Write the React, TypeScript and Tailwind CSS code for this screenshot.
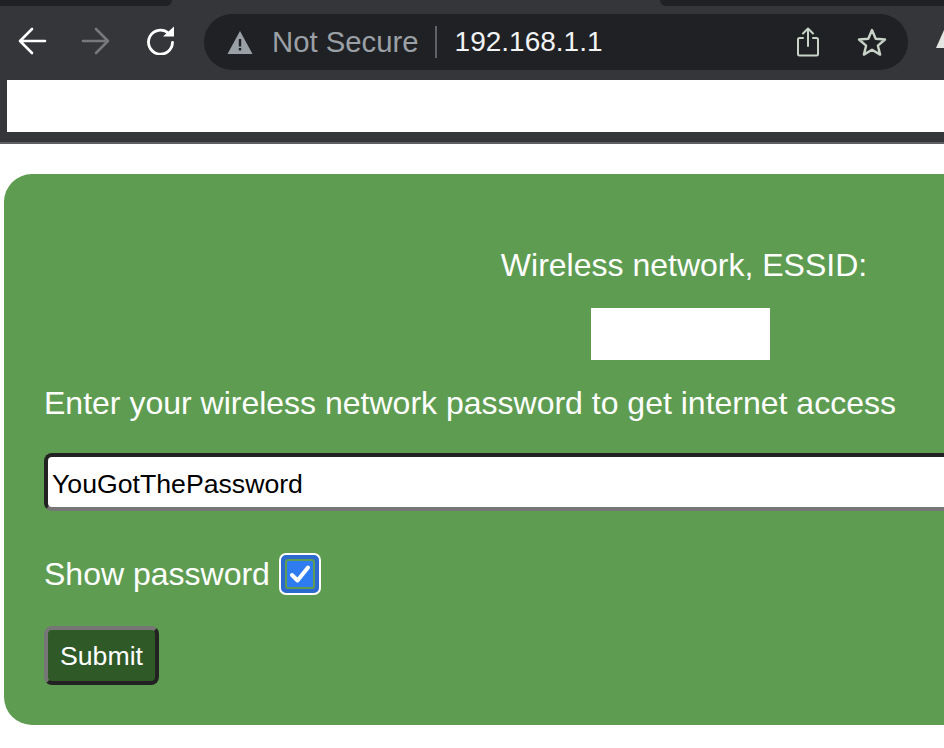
export default function App() {
  return (
    <div className="w-[944px] h-[748px] overflow-hidden bg-white font-['Liberation_Sans',Arial,sans-serif]">
      <header className="relative h-[144px] bg-[#35363a] border-b-2 border-[#5f6063]">
        <div className="absolute left-0 top-0 w-[172px] h-[6px] bg-[#202124] rounded-br-[8px]" />
        <div className="absolute left-[660px] top-0 w-[284px] h-[6px] bg-[#202124] rounded-bl-[8px]" />
        <div className="flex items-center h-[80px] pt-[4px] pl-[18px]">
          <svg width="30" height="28" viewBox="0 0 30 28" fill="none" stroke="#fff" strokeWidth="2.6" strokeLinecap="round" strokeLinejoin="round" className="w-[30px] h-[28px] mt-[-2px]">
            <path d="M2 14H27M14 2L2 14L14 26" />
          </svg>
          <svg width="30" height="28" viewBox="0 0 30 28" fill="none" stroke="#77787b" strokeWidth="2.6" strokeLinecap="round" strokeLinejoin="round" className="ml-[33px] w-[30px] h-[28px] mt-[-2px]">
            <path d="M2 14H27M15 2L27 14L15 26" />
          </svg>
          <svg width="30" height="30" viewBox="0 0 30 30" fill="none" className="ml-[35px] w-[30px] h-[30px] mt-[-4px]">
            <path d="M22.5 8.2A12 12 0 1 0 26.5 17.5" stroke="#fff" strokeWidth="2.8" strokeLinecap="round" />
            <path d="M17 11.5L28 1.5V11.5Z" fill="#fff" />
          </svg>
          <div className="ml-[28px] flex items-center w-[704px] h-[56px] rounded-[28px] bg-[#202124]">
            <svg width="26" height="24" viewBox="0 0 26 24" className="ml-[23px] w-[26px] h-[24px]">
              <path d="M13 1L25.5 24H0.5Z" fill="#9aa0a6" />
              <path d="M11.8 9H14.2V16.5H11.8ZM11.8 18H14.2V20.5H11.8Z" fill="#202124" />
            </svg>
            <span className="ml-[19px] text-[29.3px] text-[#9aa0a6] leading-none">Not Secure</span>
            <span className="ml-[16px] w-[2px] h-[32px] bg-[#5f6368]" />
            <span className="ml-[18px] text-[28px] text-[#f1f3f4] leading-none">192.168.1.1</span>
            <svg width="24" height="30" viewBox="0 0 24 30" fill="none" stroke="#c7d3c7" strokeWidth="2" strokeLinecap="round" strokeLinejoin="round" className="ml-auto w-[24px] h-[30px]">
              <path d="M7 11H3.5A1.5 1.5 0 0 0 2 12.5V27A1.5 1.5 0 0 0 3.5 28.500H20.500A1.5 1.5 0 0 0 22 27V12.5A1.5 1.500 0 0 0 20.500 11H17" />
              <path d="M12 19V2M7 6.500L12 1.500L17 6.500" />
            </svg>
            <svg width="30" height="28" viewBox="0 0 30 28" fill="none" stroke="#c7d3c7" strokeWidth="2.4" strokeLinejoin="round" className="ml-[37px] mr-[21px] w-[30px] h-[28px]">
              <path d="M15 2L18.700 10.800L28 11.500L20.900 17.600L23.100 26.600L15 21.800L6.900 26.600L9.100 17.600L2 11.500L11.300 10.800Z" />
            </svg>
          </div>
          <svg width="10" height="20" viewBox="0 0 10 20" className="absolute left-[936px] top-[30px] w-[10px] h-[20px]">
            <path d="M8 0L10 0V18H0Z" fill="#e4e6e2" />
          </svg>
        </div>
        <div className="ml-[7px] h-[52px] bg-white" />
      </header>

      <main className="ml-[4px] mt-[30px] w-[1360px] h-[551px] rounded-[28px] bg-[#5e9c52] pl-[40px] pt-[70px] text-white">
        <h2 className="w-[1280px] text-center text-[32px] leading-[42px] font-normal">Wireless network, ESSID:</h2>
        <div className="mt-[22px] ml-[547px] w-[179px] h-[52px] bg-white" />
        <p className="mt-[22px] text-[32px] leading-[42px]">Enter your wireless network password to get internet access</p>
        <input
          readOnly
          value="YouGotThePassword"
          className="mt-[29px] block w-[1280px] h-[58px] rounded-[8px] border-4 border-t-[#222222] border-l-[#222222] border-b-[#767676] border-r-[#767676] bg-white px-[4px] pt-[5px] text-[26.67px] text-black outline-none"
        />
        <div className="mt-[42px] flex items-center h-[42px]">
          <span className="text-[32px] leading-[42px]">Show password</span>
          <span className="ml-[9px] flex items-center justify-center w-[42px] h-[42px] rounded-[7px] border-2 border-white bg-[#2c6ad0]">
            <span className="flex items-center justify-center w-[30px] h-[30px] rounded-[3px] border-2 border-[#5e9c52] bg-[#2f7cf0]">
              <svg width="22" height="20" viewBox="0 0 22 20" fill="none" stroke="#fff" strokeWidth="4" strokeLinecap="round" strokeLinejoin="round" className="w-[22px] h-[20px]">
                <path d="M3 11L8.500 16.500L19 3.500" />
              </svg>
            </span>
          </span>
        </div>
        <button className="mt-[31px] block w-[115px] h-[59px] rounded-[8px] border-4 border-t-[#767676] border-l-[#767676] border-b-[#222222] border-r-[#222222] bg-[#2f5a28] text-[26.67px] text-white">
          Submit
        </button>
      </main>
    </div>
  );
}
